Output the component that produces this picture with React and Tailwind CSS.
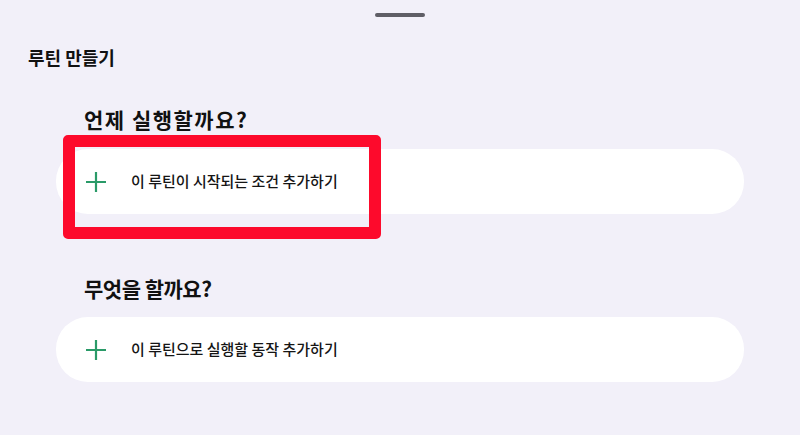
import React from "react";

const PlusIcon = () => (
  <svg width="22" height="22" viewBox="0 0 22 22" className="shrink-0">
    <path d="M11 1v20M1 11h20" stroke="#2a9a68" strokeWidth="2.2" strokeLinecap="butt" />
  </svg>
);

const AddCard = ({ label }) => (
  <div className="flex items-center h-[65px] ml-[56px] mr-[56px] bg-white rounded-[32px] pl-[29px]">
    <PlusIcon />
    <span className="ml-[24px] text-[15px] font-medium text-[#151515]">{label}</span>
  </div>
);

export default function App() {
  return (
    <div
      className="relative w-[800px] h-[435px] bg-[#f2f0f9] flex flex-col overflow-hidden"
      style={{ fontFamily: '"Noto Sans CJK KR", "Noto Sans", sans-serif' }}
    >
      {/* 상단 핸들 */}
      <div className="self-center mt-[13px] w-[50px] h-[4px] rounded-full bg-[#5f5e66]" />

      <h1 className="mt-[28px] ml-[28px] text-[18px] leading-[24px] font-semibold text-[#111]">
        루틴 만들기
      </h1>

      <h2 className="mt-[36px] ml-[84px] text-[21px] leading-[28px] font-bold tracking-[1.5px] text-[#111]">
        언제 실행할까요?
      </h2>
      <div className="mt-[16px]">
        <AddCard label="이 루틴이 시작되는 조건 추가하기" />
      </div>

      <h2 className="mt-[60px] ml-[84px] text-[21px] leading-[28px] font-bold tracking-[-0.5px] text-[#111]">
        무엇을 할까요?
      </h2>
      <div className="mt-[15px]">
        <AddCard label="이 루틴으로 실행할 동작 추가하기" />
      </div>

      {/* 강조 표시 */}
      <div className="absolute left-[63px] top-[135px] w-[318px] h-[104px] border-[12px] border-[#fd0a2c] rounded-[5px]" />
    </div>
  );
}
